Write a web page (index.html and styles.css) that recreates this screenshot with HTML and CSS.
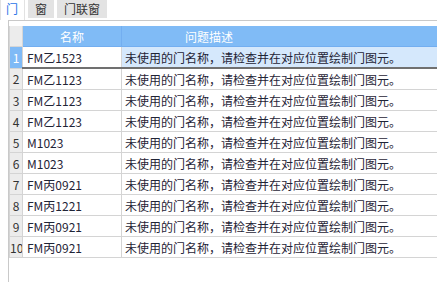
FILE: index.html
```html
<!DOCTYPE html>
<html lang="zh-CN">
<head>
	<meta charset="UTF-8">
	<link rel="stylesheet" href="styles.css">
	<title>门窗检查</title>
</head>
<body>

<div class="tabs">
	<span class="tab active">门</span>
	<span class="tab">窗</span>
	<span class="tab">门联窗</span>
</div>

<div class="panel">
	<table class="grid">
		<colgroup>
			<col class="c-num">
			<col class="c-name">
			<col class="c-desc">
		</colgroup>
		<thead>
			<tr>
				<th class="num"></th>
				<th class="name">名称</th>
				<th class="desc">问题描述</th>
			</tr>
		</thead>
		<tbody>
			<tr class="selected">
				<td class="num">1</td>
				<td class="name">FM乙1523</td>
				<td class="desc">未使用的门名称，请检查并在对应位置绘制门图元。</td>
			</tr>
			<tr>
				<td class="num">2</td>
				<td class="name">FM乙1123</td>
				<td class="desc">未使用的门名称，请检查并在对应位置绘制门图元。</td>
			</tr>
			<tr>
				<td class="num">3</td>
				<td class="name">FM乙1123</td>
				<td class="desc">未使用的门名称，请检查并在对应位置绘制门图元。</td>
			</tr>
			<tr>
				<td class="num">4</td>
				<td class="name">FM乙1123</td>
				<td class="desc">未使用的门名称，请检查并在对应位置绘制门图元。</td>
			</tr>
			<tr>
				<td class="num">5</td>
				<td class="name">M1023</td>
				<td class="desc">未使用的门名称，请检查并在对应位置绘制门图元。</td>
			</tr>
			<tr>
				<td class="num">6</td>
				<td class="name">M1023</td>
				<td class="desc">未使用的门名称，请检查并在对应位置绘制门图元。</td>
			</tr>
			<tr>
				<td class="num">7</td>
				<td class="name">FM丙0921</td>
				<td class="desc">未使用的门名称，请检查并在对应位置绘制门图元。</td>
			</tr>
			<tr>
				<td class="num">8</td>
				<td class="name">FM丙1221</td>
				<td class="desc">未使用的门名称，请检查并在对应位置绘制门图元。</td>
			</tr>
			<tr>
				<td class="num">9</td>
				<td class="name">FM丙0921</td>
				<td class="desc">未使用的门名称，请检查并在对应位置绘制门图元。</td>
			</tr>
			<tr>
				<td class="num">10</td>
				<td class="name">FM丙0921</td>
				<td class="desc">未使用的门名称，请检查并在对应位置绘制门图元。</td>
			</tr>
		</tbody>
	</table>
</div><!-- end of panel -->

</body>
</html>
```

FILE: styles.css
```css
html, body {
	margin: 0;
	height: 100%;
	overflow: hidden;
	background: #fff;
	font-family: "Noto Sans CJK SC", "Noto Sans", sans-serif;
	font-size: 12px;
	color: #1f2436;
}

.tabs {
	display: flex;
	gap: 2px;
	height: 20px;
}

	.tab {
		box-sizing: border-box;
		height: 18px;
		line-height: 17px;
		padding: 0 7px;
		background: #e3e3e3;
		color: #333;
		margin-left: 1px;
	}

	.tab.active {
		height: 20px;
		padding: 0 6px 0 5px;
		margin-left: 0;
		background: #fff;
		color: #2a74e8;
		border-left: 1px solid #e2e2e2;
		border-right: 1px solid #e2e2e2;
	}

.panel {
	margin-left: 8px;
	height: calc(100% - 21px);
	border-left: 1px solid #c9c9c9;
	border-top: 1px solid #c9c9c9;
	padding-top: 5px;
	overflow: hidden;
}

.grid {
	border-collapse: collapse;
	table-layout: fixed;
	width: 100%;
}

	.c-num { width: 13px; }
	.c-name { width: 99px; }

	.grid th {
		height: 20px;
		padding: 0;
		background: #80bbf6;
		color: #fff;
		font-weight: normal;
		border: 1px solid #73aef0;
		border-top: none;
		line-height: 19px;
	}

	.grid th.num {
		background: #ececec;
		border-color: #d6d6d6;
	}

	.grid th.desc {
		text-align: left;
		padding-left: 63px;
		border-right: none;
	}

	.grid td {
		height: 20px;
		padding: 0 0 0 3px;
		border: 1px solid #d4d4d4;
		white-space: nowrap;
		overflow: hidden;
		line-height: 19px;
	}

	.grid td.desc {
		border-right: none;
	}

	.grid td.num {
		padding: 0;
		text-align: center;
		background: #ececec;
		color: #333;
	}

	.grid td.name {
		padding-left: 4px;
	}

/* selected row */
.selected td.num {
	background: #7fbaf6;
	color: #fff;
}

.selected td.desc {
	background: #d5e8fc;
}

.selected td.name,
.selected td.desc {
	border-bottom: 2px solid #707070;
}
```
